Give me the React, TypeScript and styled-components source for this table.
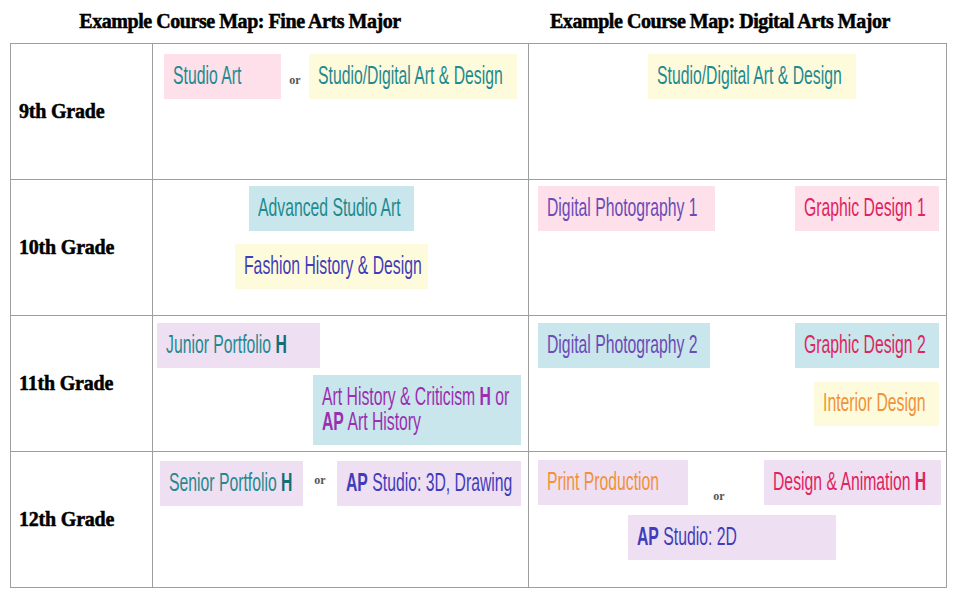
import styled, { createGlobalStyle } from 'styled-components';

const colors = {
  border: '#9e9e9e',
  pink: '#fde0ea',
  yellow: '#fefbdc',
  blue: '#c9e6ec',
  lavender: '#efdff3',
  teal: '#1f8a8f',
  tealDark: '#146f74',
  indigo: '#3f3db9',
  violet: '#6b4bb8',
  crimson: '#e0245f',
  magenta: '#9b2fb1',
  orange: '#f0923a',
};

const GlobalStyle = createGlobalStyle`
  body {
    margin: 0;
    background: #ffffff;
    font-family: "Liberation Sans", Arial, sans-serif;
  }
`;

const Page = styled.div`
  width: 960px;
  height: 600px;
`;

const Titles = styled.div`
  display: grid;
  grid-template-columns: 480px 480px;
  height: 43px;
  align-items: center;
`;

const Title = styled.h2`
  margin: 0;
  padding-bottom: 1px;
  text-align: center;
  font-family: "Liberation Serif", "Times New Roman", serif;
  font-weight: 700;
  font-size: 20px;
  letter-spacing: -0.45px;
  color: #000;
  -webkit-text-stroke: 0.5px #000;
`;

const Table = styled.div`
  margin-left: 10px;
  width: 937px;
  display: grid;
  grid-template-columns: 142px 376px 418px;
  grid-auto-rows: 136px;
  border-top: 1px solid ${colors.border};
  border-left: 1px solid ${colors.border};
  box-sizing: border-box;
`;

const Cell = styled.div<{ $pad?: string }>`
  box-sizing: border-box;
  border-right: 1px solid ${colors.border};
  border-bottom: 1px solid ${colors.border};
  display: flex;
  flex-direction: column;
  align-items: flex-start;
  padding: ${(p) => p.$pad ?? '0'};
`;

const GradeCell = styled(Cell)`
  justify-content: center;
  padding-left: 8px;
  font-family: "Liberation Serif", "Times New Roman", serif;
  font-weight: 700;
  font-size: 20px;
  letter-spacing: -0.2px;
  color: #000;
  -webkit-text-stroke: 0.5px #000;
`;

const Line = styled.div<{ $spread?: boolean }>`
  display: flex;
  align-items: flex-start;
  align-self: stretch;
  justify-content: ${(p) => (p.$spread ? 'space-between' : 'flex-start')};
`;

const Course = styled.div<{ $bg: string; $w: number; $h?: number; $ml?: number; $mt?: number; $end?: boolean }>`
  flex-shrink: 0;
  box-sizing: border-box;
  width: ${(p) => p.$w}px;
  height: ${(p) => p.$h ?? 45}px;
  margin-left: ${(p) => p.$ml ?? 0}px;
  margin-top: ${(p) => p.$mt ?? 0}px;
  align-self: ${(p) => (p.$end ? 'flex-end' : 'auto')};
  padding: 0 0 3px 9px;
  display: flex;
  align-items: center;
  background: ${(p) => p.$bg};
`;

/* the reference uses a tall condensed face; squeeze Liberation Sans to match */
const CourseName = styled.span<{ $color: string }>`
  display: inline-block;
  white-space: nowrap;
  font-family: "Liberation Sans", Arial, sans-serif;
  font-size: 25px;
  line-height: 25px;
  color: ${(p) => p.$color};
  transform: scaleX(0.63);
  transform-origin: left center;
  margin-right: -200px;

  b {
    font-weight: 700;
  }
`;

const Or = styled.span<{ $w: number; $mt: number; $ml?: number }>`
  flex-shrink: 0;
  width: ${(p) => p.$w}px;
  margin-top: ${(p) => p.$mt}px;
  margin-left: ${(p) => p.$ml ?? 0}px;
  text-align: center;
  font-family: "Liberation Serif", "Times New Roman", serif;
  font-weight: 700;
  font-size: 12px;
  line-height: 12px;
  color: #555;
`;

export default function App() {
  return (
    <Page>
      <GlobalStyle />
      <Titles>
        <Title>Example Course Map: Fine Arts Major</Title>
        <Title>Example Course Map: Digital Arts Major</Title>
      </Titles>
      <Table>
        <GradeCell>9th Grade</GradeCell>
        <Cell $pad="10px 0 0 11px">
          <Line>
            <Course $bg={colors.pink} $w={117}>
              <CourseName $color={colors.teal}>Studio Art</CourseName>
            </Course>
            <Or $w={28} $mt={20}>or</Or>
            <Course $bg={colors.yellow} $w={208}>
              <CourseName $color={colors.teal}>Studio/Digital Art &amp; Design</CourseName>
            </Course>
          </Line>
        </Cell>
        <Cell $pad="10px 0 0 119px">
          <Course $bg={colors.yellow} $w={208}>
            <CourseName $color={colors.teal}>Studio/Digital Art &amp; Design</CourseName>
          </Course>
        </Cell>

        <GradeCell>10th Grade</GradeCell>
        <Cell $pad="6px 0 0 0">
          <Course $bg={colors.blue} $w={165} $ml={96}>
            <CourseName $color={colors.teal}>Advanced Studio Art</CourseName>
          </Course>
          <Course $bg={colors.yellow} $w={193} $ml={82} $mt={13}>
            <CourseName $color={colors.indigo}>Fashion History &amp; Design</CourseName>
          </Course>
        </Cell>
        <Cell $pad="6px 7px 0 9px">
          <Line $spread>
            <Course $bg={colors.pink} $w={177}>
              <CourseName $color={colors.violet}>Digital Photography 1</CourseName>
            </Course>
            <Course $bg={colors.pink} $w={144}>
              <CourseName $color={colors.crimson}>Graphic Design 1</CourseName>
            </Course>
          </Line>
        </Cell>

        <GradeCell>11th Grade</GradeCell>
        <Cell $pad="7px 0 0 4px">
          <Course $bg={colors.lavender} $w={163}>
            <CourseName $color={colors.teal}>
              Junior Portfolio <b style={{ color: colors.tealDark }}>H</b>
            </CourseName>
          </Course>
          <Course $bg={colors.blue} $w={208} $h={70} $ml={156} $mt={7}>
            <CourseName $color={colors.magenta}>
              Art History &amp; Criticism <b>H</b> or
              <br />
              <b>AP</b> Art History
            </CourseName>
          </Course>
        </Cell>
        <Cell $pad="7px 7px 0 9px">
          <Line $spread>
            <Course $bg={colors.blue} $w={172}>
              <CourseName $color={colors.violet}>Digital Photography 2</CourseName>
            </Course>
            <Course $bg={colors.blue} $w={144}>
              <CourseName $color={colors.crimson}>Graphic Design 2</CourseName>
            </Course>
          </Line>
          <Course $bg={colors.yellow} $w={125} $h={44} $mt={14} $end>
            <CourseName $color={colors.orange}>Interior Design</CourseName>
          </Course>
        </Cell>

        <GradeCell>12th Grade</GradeCell>
        <Cell $pad="9px 0 0 7px">
          <Line>
            <Course $bg={colors.lavender} $w={143}>
              <CourseName $color={colors.teal}>
                Senior Portfolio <b style={{ color: colors.tealDark }}>H</b>
              </CourseName>
            </Course>
            <Or $w={34} $mt={13}>or</Or>
            <Course $bg={colors.lavender} $w={184}>
              <CourseName $color={colors.indigo}>
                <b>AP</b> Studio: 3D, Drawing
              </CourseName>
            </Course>
          </Line>
        </Cell>
        <Cell $pad="8px 0 0 9px">
          <Line>
            <Course $bg={colors.lavender} $w={150}>
              <CourseName $color={colors.orange}>Print Production</CourseName>
            </Course>
            <Or $w={62} $mt={30}>or</Or>
            <Course $bg={colors.lavender} $w={177} $ml={14}>
              <CourseName $color={colors.crimson}>
                Design &amp; Animation <b>H</b>
              </CourseName>
            </Course>
          </Line>
          <Course $bg={colors.lavender} $w={208} $ml={90} $mt={10}>
            <CourseName $color={colors.indigo}>
              <b>AP</b> Studio: 2D
            </CourseName>
          </Course>
        </Cell>
      </Table>
    </Page>
  );
}
